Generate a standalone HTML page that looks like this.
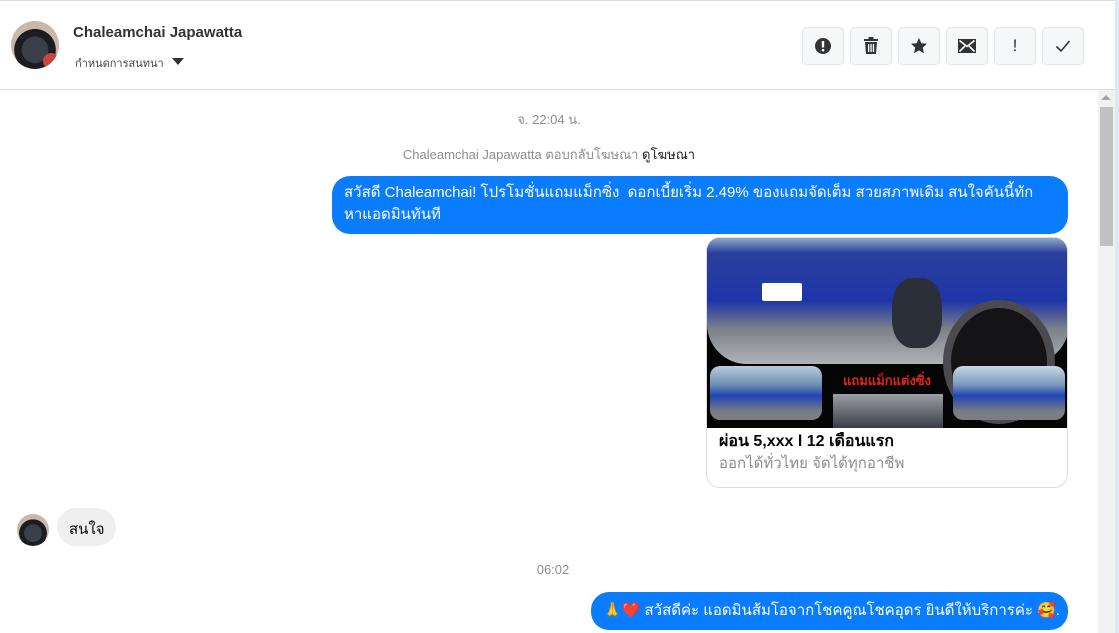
<!DOCTYPE html>
<html><head><meta charset="utf-8"><style>
*{box-sizing:border-box;margin:0;padding:0}
body{width:1119px;height:633px;overflow:hidden;background:#fff;font-family:"Liberation Sans","Noto Sans CJK SC",sans-serif;position:relative}
.abs{position:absolute}
.hdr{left:0;top:0;width:1115px;height:90px;border-top:1px solid #dcdde0;border-bottom:1px solid #dcdde0;background:#fff}
.btn{position:absolute;top:26px;width:42px;height:38px;background:#f6f7f9;border:1px solid #e1e3e6;border-radius:5px;display:flex;align-items:center;justify-content:center}
.bub{background:#0a7cff;color:#fff;border-radius:18px;font-size:15px;line-height:22px}
.center{width:1098px;text-align:center;color:#8a8d91;font-size:13px}
</style></head><body>
<div class="abs hdr">
 <div class="abs" style="left:11px;top:20px;width:48px;height:48px;border-radius:50%;background:radial-gradient(circle at 50% 60%,#3a3f4a 0 35%,#1b1d22 36% 55%,#c9b7a8 56%);overflow:hidden"><div class="abs" style="left:32px;top:32px;width:16px;height:16px;background:#c9463d;border-radius:50%"></div></div>
 <div class="abs" style="left:73px;top:23px;font-size:15px;font-weight:bold;color:#333">Chaleamchai Japawatta</div>
 <div class="abs" style="left:75px;top:53px;font-size:11px;color:#444">กำหนดการสนทนา</div>
 <div class="abs" style="left:172px;top:57px;border-left:6px solid transparent;border-right:6px solid transparent;border-top:7px solid #333"></div>
 <div class="btn" style="left:802px"><svg width="18" height="18"><circle cx="9" cy="9" r="8" fill="#333"/><rect x="7.8" y="4" width="2.4" height="6.5" fill="#fff"/><rect x="7.8" y="12" width="2.4" height="2.4" fill="#fff"/></svg></div>
 <div class="btn" style="left:850px"><svg width="16" height="18"><rect x="1" y="2" width="14" height="2" fill="#333"/><rect x="5.5" y="0" width="5" height="2" fill="#333"/><path d="M2 5h12l-1 12H3z" fill="#333"/><rect x="5" y="7" width="1.3" height="8" fill="#fff"/><rect x="7.4" y="7" width="1.3" height="8" fill="#fff"/><rect x="9.8" y="7" width="1.3" height="8" fill="#fff"/></svg></div>
 <div class="btn" style="left:898px"><svg width="18" height="18"><path d="M9 1l2.4 5.2 5.6.6-4.2 3.8 1.2 5.6L9 13.4 4 16.2l1.2-5.6L1 6.8l5.6-.6z" fill="#333"/></svg></div>
 <div class="btn" style="left:946px"><svg width="18" height="14"><rect width="18" height="14" fill="#333"/><path d="M1.5 1.5L9 7.5 16.5 1.5M1.5 12.5L7 7M16.5 12.5L11 7" stroke="#fff" stroke-width="1.6" fill="none"/></svg></div>
 <div class="btn" style="left:994px;font-size:17px;color:#333">!</div>
 <div class="btn" style="left:1042px"><svg width="16" height="14"><path d="M1.5 7.5l4.5 4.5 8.5-10" stroke="#333" stroke-width="1.6" fill="none"/></svg></div>
</div>
<div class="abs" style="left:1115px;top:0;width:4px;height:633px;background:#e4e6f4"></div>
<div class="abs" style="left:1098px;top:90px;width:17px;height:543px;background:#f1f1f1"></div>
<div class="abs" style="left:1101px;top:95px;border-left:5px solid transparent;border-right:5px solid transparent;border-bottom:5px solid #a3a3a3"></div>
<div class="abs" style="left:1100px;top:107px;width:13px;height:139px;background:#c1c1c1"></div>

<div class="abs center" style="left:0;top:109px">จ. 22:04 น.</div>
<div class="abs center" style="left:0;top:144px">Chaleamchai Japawatta ตอบกลับโฆษณา <span style="color:#1c1e21">ดูโฆษณา</span></div>
<div class="abs bub" style="left:332px;top:176px;width:736px;height:58px;padding:6px 12px;white-space:nowrap">สวัสดี Chaleamchai! โปรโมชั่นแถมแม็กซิ่ง &nbsp;ดอกเบี้ยเริ่ม 2.49% ของแถมจัดเต็ม สวยสภาพเดิม สนใจคันนี้ทัก<br>หาแอดมินทันที</div>

<div class="abs" style="left:706px;top:237px;width:362px;height:251px;border:1px solid #dcdde0;border-radius:14px;overflow:hidden;background:#fff">
 <div class="abs" style="left:0;top:0;width:362px;height:190px;background:#050505;overflow:hidden">
  <div class="abs" style="left:0;top:0;width:362px;height:126px;border-radius:0 0 40px 40px;background:linear-gradient(180deg,#8fa9c7 0,#2a3f9c 12%,#1e35a8 50%,#7c8087 72%,#b0b2b6 100%)"></div>
  <div class="abs" style="left:55px;top:45px;width:40px;height:18px;background:#fff;border-radius:2px"></div>
  <div class="abs" style="left:185px;top:40px;width:50px;height:70px;border-radius:40%;background:#2b2f38"></div>
  <div class="abs" style="left:236px;top:62px;width:112px;height:124px;border-radius:50%;border:8px solid #4a4a50;background:#141416"></div>
  <div class="abs" style="left:3px;top:128px;width:112px;height:54px;border-radius:10px;background:linear-gradient(180deg,#b9cbe0 0,#6c8fb0 35%,#1f44b8 55%,#7b7e80 85%)"></div>
  <div class="abs" style="left:125px;top:132px;width:110px;height:22px;color:#e0241b;font-weight:bold;font-size:13px;text-align:center">แถมแม็กแต่งซิ่ง</div>
  <div class="abs" style="left:126px;top:156px;width:110px;height:34px;background:linear-gradient(180deg,#9a9ea5,#3a3d44)"></div>
  <div class="abs" style="left:246px;top:128px;width:112px;height:54px;border-radius:10px;background:linear-gradient(180deg,#cbd7e6 0,#7a98bb 35%,#1f44b8 55%,#7b7e80 85%)"></div>
 </div>
 <div class="abs" style="left:12px;top:191px;font-size:16px;font-weight:bold;color:#050505">ผ่อน 5,xxx l 12 เดือนแรก</div>
 <div class="abs" style="left:12px;top:213px;font-size:15px;color:#8a8d91">ออกได้ทั่วไทย จัดได้ทุกอาชีพ</div>
</div>

<div class="abs" style="left:17px;top:514px;width:32px;height:32px;border-radius:50%;background:radial-gradient(circle at 50% 60%,#3a3f4a 0 35%,#1b1d22 36% 55%,#c9b7a8 56%)"></div>
<div class="abs" style="left:57px;top:508px;width:59px;height:38px;border-radius:19px;background:#efefef;font-size:15px;color:#050505;padding:9px 12px">สนใจ</div>
<div class="abs center" style="left:4px;top:562px">06:02</div>
<div class="abs bub" style="left:591px;top:592px;width:477px;height:38px;padding:8px 12px;white-space:nowrap">🙏❤️ สวัสดีค่ะ แอดมินส้มโอจากโชคคูณโชคอุดร ยินดีให้บริการค่ะ 🥰.</div>
</body></html>
